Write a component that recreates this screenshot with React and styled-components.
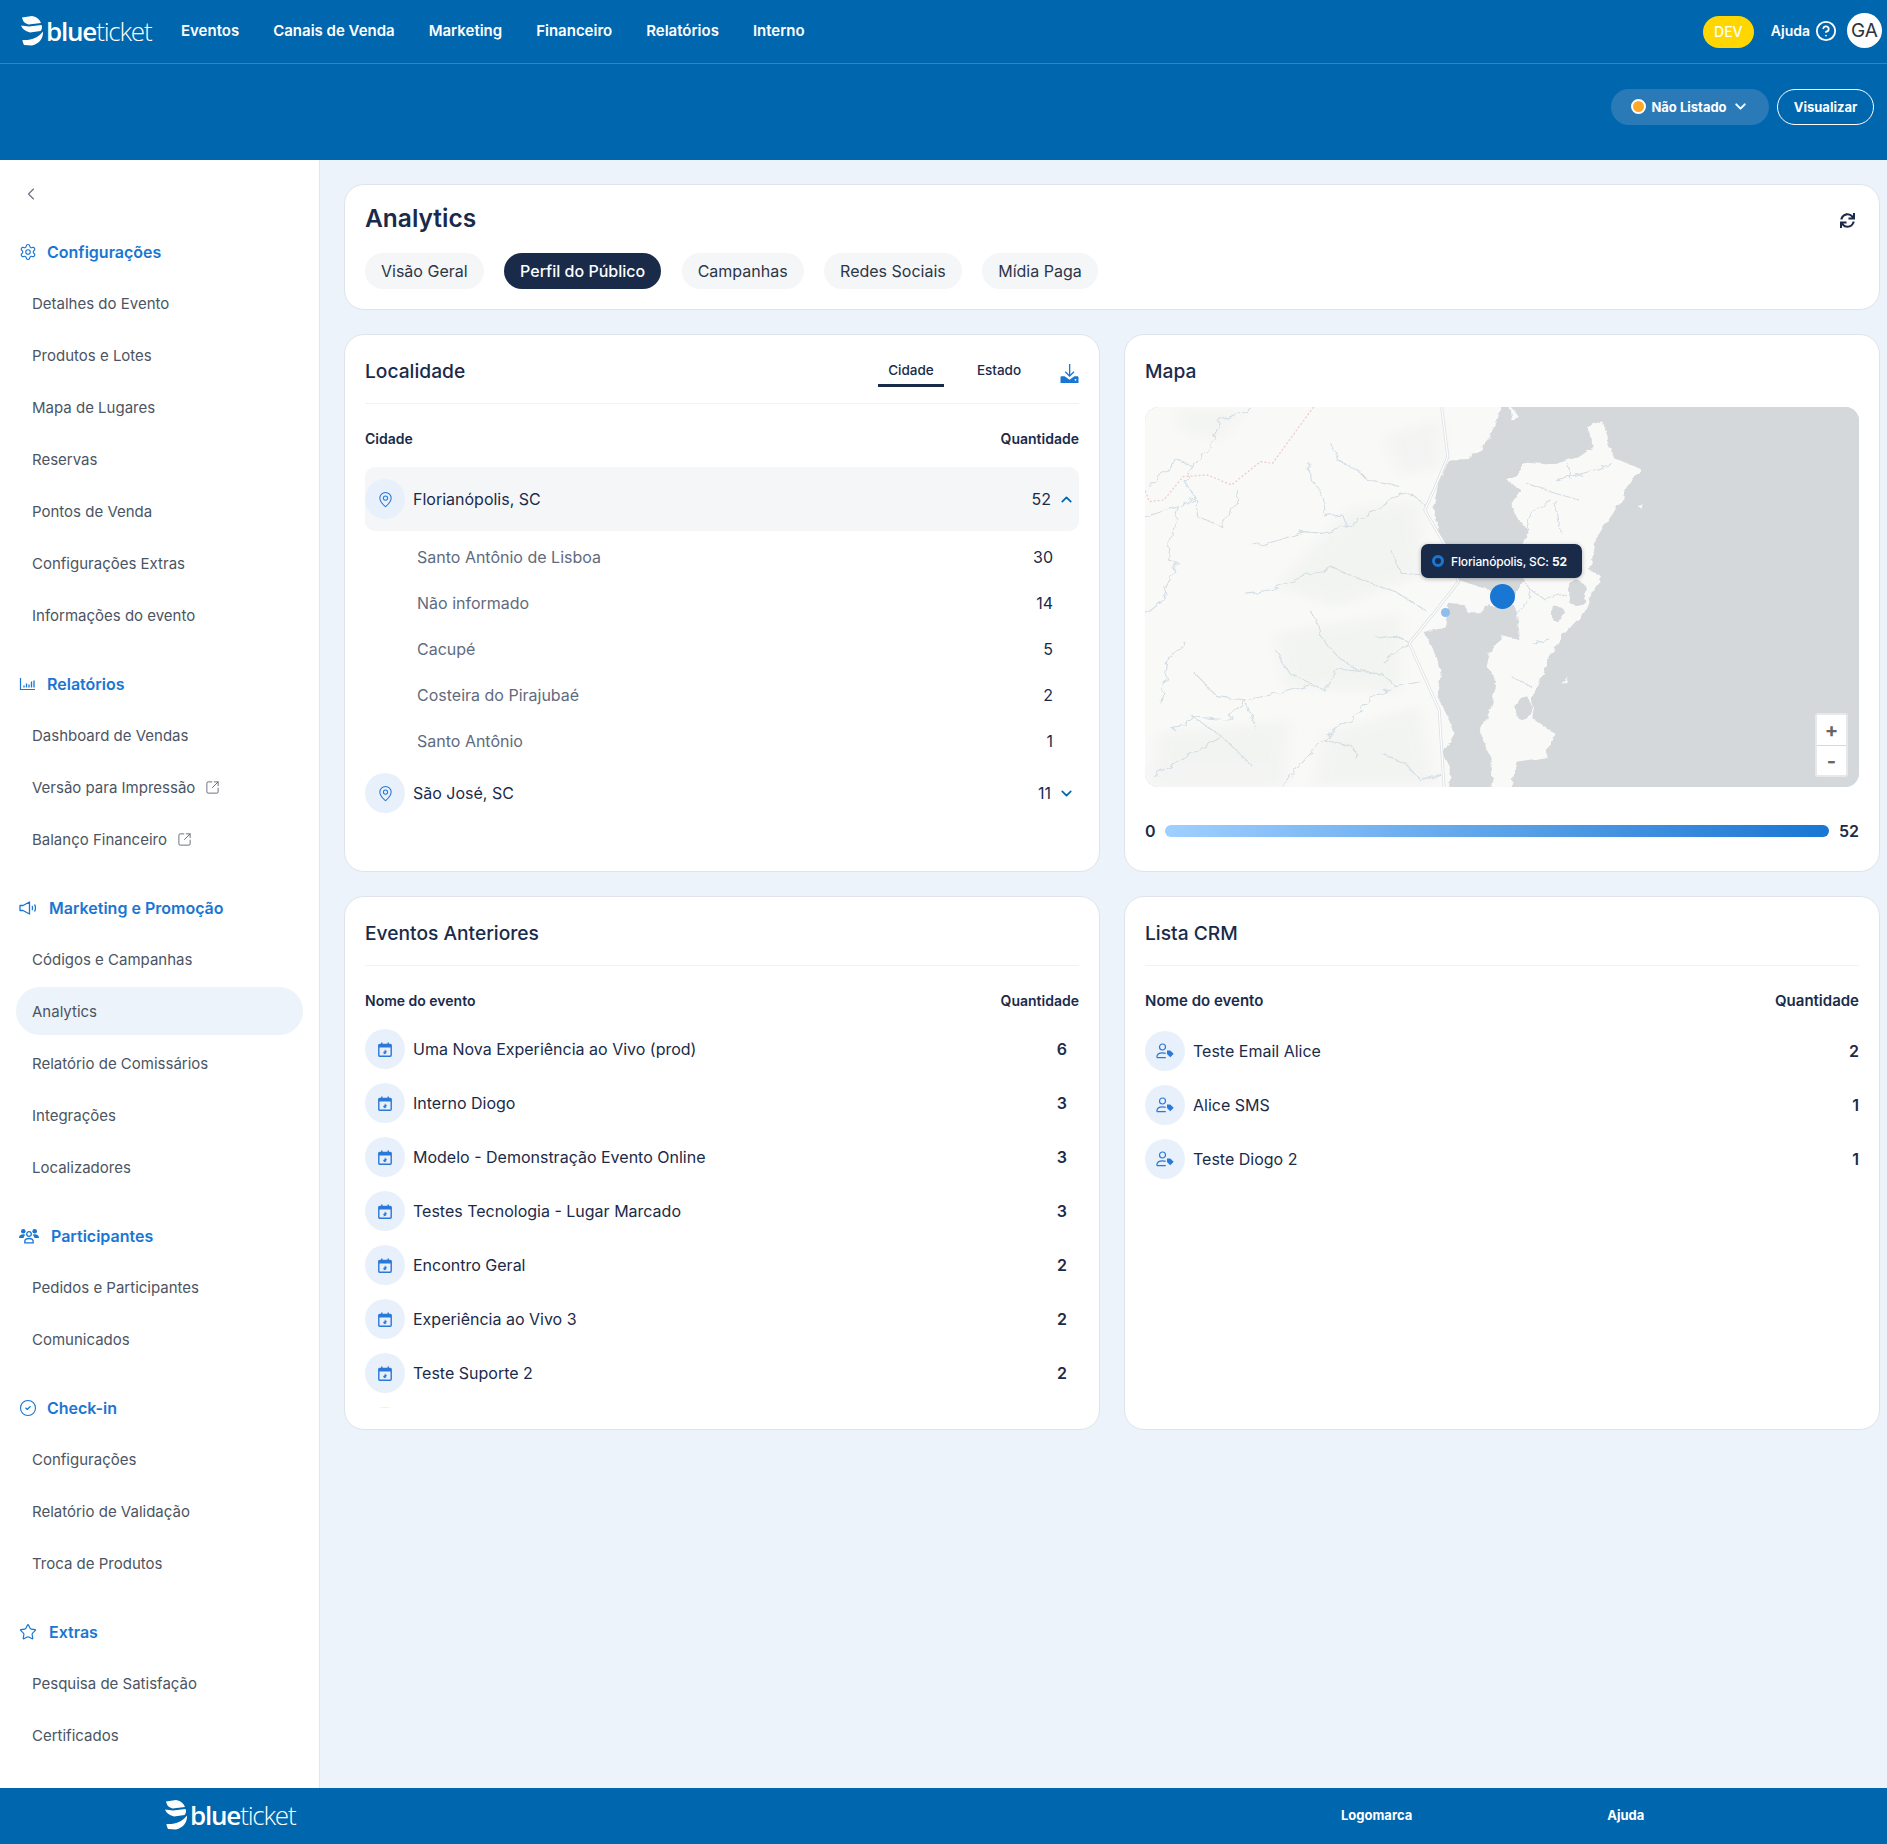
import React from "react";
import styled, { createGlobalStyle } from "styled-components";
import {
  ChevronDown,
  ChevronLeft,
  ChevronUp,
  CircleCheck,
  CircleHelp,
  MapPin,
  Settings,
  SquareArrowOutUpRight,
  Star,
} from "lucide-react";
import { FaSync } from "react-icons/fa";

const BLUE = "#0066ae";
const ACCENT = "#1976d2";
const NAVY = "#1a2b4a";

const GlobalStyle = createGlobalStyle`
  * { box-sizing: border-box; }
  body {
    margin: 0;
    background: #edf3fa;
    font-family: Inter, "Liberation Sans", sans-serif;
    color: ${NAVY};
  }
`;

const Page = styled.div`
  width: 1887px;
  height: 1844px;
  display: flex;
  flex-direction: column;
  overflow: hidden;
`;

const TopBar = styled.header`
  height: 64px;
  background: ${BLUE};
  border-bottom: 1px solid #3a84bd;
  display: flex;
  align-items: center;
  padding: 0 5px 2px 20px;
  color: #fff;
`;

const LogoWrap = styled.div`
  display: flex;
  align-items: center;
  gap: 2px;
  width: 161px;
  flex-shrink: 0;
`;

const LogoText = styled.span`
  font-family: "Open Sans", sans-serif;
  font-size: 26px;
  line-height: 32px;
  letter-spacing: -1.2px;
  color: #fff;
  font-weight: 300;
  b {
    font-weight: 600;
  }
`;

const Nav = styled.nav`
  display: flex;
  gap: 34px;
  flex: 1;
`;

const NavLink = styled.a`
  font-size: 15px;
  font-weight: 600;
  color: #fff;
`;

const DevBadge = styled.span`
  width: 51px;
  height: 32px;
  border-radius: 16px;
  background: #ffd600;
  color: #fff;
  font-size: 14px;
  font-weight: 500;
  display: flex;
  align-items: center;
  justify-content: center;
  margin: 2px 17px 0 0;
`;

const HelpLink = styled.span`
  display: flex;
  align-items: center;
  gap: 5px;
  font-size: 14px;
  font-weight: 600;
  margin-right: 10px;
`;

const Avatar = styled.span`
  width: 35px;
  height: 35px;
  border-radius: 50%;
  background: #fff;
  color: #2b3440;
  font-size: 19px;
  display: flex;
  align-items: center;
  justify-content: center;
`;

const SubBar = styled.div`
  height: 96px;
  background: ${BLUE};
  display: flex;
  justify-content: flex-end;
  align-items: flex-start;
  gap: 8px;
  padding: 25px 13px 0 0;
`;

const StatusPill = styled.div`
  width: 158px;
  height: 36px;
  padding-bottom: 1px;
  border-radius: 18px;
  background: #2b7ab8;
  color: #fff;
  font-size: 13px;
  font-weight: 700;
  display: flex;
  align-items: center;
  justify-content: center;
  gap: 5px;
`;

const StatusDot = styled.span`
  width: 15px;
  height: 15px;
  border-radius: 50%;
  background: #ffa726;
  border: 2px solid #fff;
`;

const OutlineButton = styled.div`
  width: 97px;
  height: 36px;
  padding-bottom: 1px;
  border-radius: 18px;
  border: 1px solid #fff;
  color: #fff;
  font-size: 13px;
  font-weight: 700;
  display: flex;
  align-items: center;
  justify-content: center;
`;

const Middle = styled.div`
  flex: 1;
  display: flex;
  min-height: 0;
`;

const Sidebar = styled.aside`
  width: 320px;
  flex-shrink: 0;
  background: #fff;
  border-right: 1px solid #e2e6ec;
`;

const BackRow = styled.div`
  height: 54px;
  padding: 24px 0 0 21px;
  margin-bottom: 12px;
  color: #6b7280;
`;

const Section = styled.section`
  display: flex;
  flex-direction: column;
  margin-bottom: 17px;
`;

const SectionHead = styled.div`
  height: 51px;
  padding-left: 19px;
  display: flex;
  align-items: center;
  gap: ${(p) => p.$gap}px;
  font-size: 16px;
  font-weight: 600;
  color: ${ACCENT};
`;

const SideItem = styled.a`
  height: 48px;
  margin: 2px 16px;
  padding-left: 16px;
  border-radius: 24px;
  display: flex;
  align-items: center;
  gap: 10px;
  font-size: 15px;
  color: #4b5563;
  background: ${(p) => (p.$active ? "#edf3fa" : "transparent")};
`;

const Main = styled.main`
  flex: 1;
  padding: 24px 7px 0 24px;
  display: flex;
  flex-direction: column;
  gap: 24px;
`;

const Card = styled.div`
  background: #fff;
  border: 1px solid #e0e4ea;
  border-radius: 20px;
  padding: 0 20px;
  min-width: 0;
  overflow: hidden;
`;

const HeroCard = styled(Card)`
  height: 126px;
`;

const HeroTop = styled.div`
  height: 68px;
  display: flex;
  align-items: center;
  justify-content: space-between;
  padding: 0 4px 2px 0;
`;

const HeroTitle = styled.h1`
  margin: 0;
  font-size: 24.5px;
  font-weight: 600;
  color: ${NAVY};
`;

const RefreshIcon = styled(FaSync)`
  margin-top: 4px;
  color: ${NAVY};
`;

const TabRow = styled.div`
  display: flex;
  gap: 20.5px;
`;

const Tab = styled.span`
  height: 36px;
  padding: 0 16px;
  border-radius: 18px;
  font-size: 16px;
  display: flex;
  align-items: center;
  background: ${(p) => (p.$active ? NAVY : "#f5f6f8")};
  color: ${(p) => (p.$active ? "#fff" : "#2b3648")};
  font-weight: ${(p) => (p.$active ? 500 : 400)};
`;

const Grid = styled.div`
  display: grid;
  grid-template-columns: 1fr 1fr;
  grid-template-rows: 538px 534px;
  column-gap: 24px;
  row-gap: 24px;
`;

const CardHead = styled.div`
  height: 69px;
  padding-top: 3px;
  display: flex;
  align-items: center;
  justify-content: space-between;
  border-bottom: ${(p) => (p.$plain ? "none" : "1px solid #f0f2f5")};
`;

const CardTitle = styled.h2`
  margin: 0;
  font-size: 19.2px;
  font-weight: 500;
  color: ${NAVY};
`;

const HeadTools = styled.div`
  display: flex;
  align-self: flex-start;
  margin-top: -3px;
`;

const MiniTab = styled.span`
  width: 66px;
  height: 35px;
  margin: 17px 22px 0 0;
  padding-top: 4px;
  display: flex;
  align-items: center;
  justify-content: center;
  font-size: 13.5px;
  font-weight: 500;
  color: ${NAVY};
  border-bottom: 3px solid ${(p) => (p.$active ? NAVY : "transparent")};
`;

const DownloadSlot = styled.span`
  margin: 29px 0 0 6px;
  display: flex;
`;

const TableHead = styled.div`
  height: 63px;
  padding-top: 6px;
  display: flex;
  align-items: center;
  justify-content: space-between;
  font-size: ${(p) => p.$size || 14}px;
  font-weight: 600;
  color: ${NAVY};
`;

const CityRow = styled.div`
  height: ${(p) => (p.$open ? 64 : 58)}px;
  display: flex;
  align-items: center;
  border-radius: 10px;
  background: ${(p) => (p.$open ? "#f5f6f8" : "transparent")};
`;

const IconCircle = styled.span`
  width: 40px;
  height: 40px;
  border-radius: 50%;
  flex-shrink: 0;
  background: #e8f1fb;
  color: #2a78d8;
  display: flex;
  align-items: center;
  justify-content: center;
  margin-right: 8px;
`;

const RowLabel = styled.span`
  flex: 1;
  font-size: 16px;
  color: ${NAVY};
`;

const CityCount = styled.span`
  font-size: 16px;
  color: ${NAVY};
`;

const Chevron = styled.span`
  width: 28px;
  padding-right: 4px;
  display: flex;
  justify-content: flex-end;
  color: ${BLUE};
`;

const SubList = styled.div`
  padding-top: 3px;
`;

const SubRow = styled.div`
  height: 46px;
  padding: 0 26px 0 52px;
  display: flex;
  align-items: center;
  justify-content: space-between;
  font-size: 16px;
  color: #5f6b7e;
  span:last-child {
    color: ${NAVY};
  }
`;

const MapBox = styled.div`
  position: relative;
  height: 380px;
  margin-top: 3px;
  border-radius: 14px;
  overflow: hidden;
  background: #d4d8db;
  svg.base {
    display: block;
    width: 100%;
    height: 100%;
  }
`;

const MapDot = styled.span`
  position: absolute;
  left: ${(p) => p.$x}px;
  top: ${(p) => p.$y}px;
  width: ${(p) => p.$size}px;
  height: ${(p) => p.$size}px;
  margin: ${(p) => -p.$size / 2}px 0 0 ${(p) => -p.$size / 2}px;
  border-radius: 50%;
  background: ${(p) => p.$color};
`;

const MapTip = styled.div`
  position: absolute;
  left: 276px;
  top: 137px;
  width: 161px;
  height: 34px;
  border-radius: 7px;
  background: ${NAVY};
  box-shadow: 0 1px 4px rgba(0, 0, 0, 0.3);
  color: #fff;
  font-size: 12px;
  font-weight: 500;
  letter-spacing: -0.15px;
  display: flex;
  align-items: center;
  gap: 7px;
  padding-left: 11px;
  b {
    font-weight: 700;
  }
`;

const TipRing = styled.span`
  width: 12px;
  height: 12px;
  border-radius: 50%;
  border: 3.5px solid ${ACCENT};
  background: ${NAVY};
`;

const ZoomBox = styled.div`
  position: absolute;
  right: 11px;
  bottom: 10px;
  width: 33px;
  height: 64px;
  background: #fff;
  border: 2px solid #e6e8ea;
  border-radius: 3px;
  display: grid;
  grid-template-rows: 1fr 1fr;
`;

const ZoomKey = styled.span`
  display: flex;
  align-items: center;
  justify-content: center;
  font-size: 20px;
  font-weight: 700;
  line-height: 1;
  color: #666;
  & + & {
    border-top: 1px solid #d5d8dc;
  }
`;

const Legend = styled.div`
  height: 30px;
  margin-top: 29px;
  display: flex;
  align-items: center;
  gap: 9.5px;
  font-size: 16px;
  font-weight: 600;
  color: ${NAVY};
`;

const LegendBar = styled.div`
  flex: 1;
  height: 12px;
  border-radius: 6px;
  background: linear-gradient(90deg, #9fcfff, ${ACCENT});
`;

const ScrollList = styled.div`
  height: ${(p) => p.$h}px;
  margin-top: ${(p) => p.$top}px;
  overflow: hidden;
`;

const ListRow = styled.div`
  height: 54px;
  padding: 7px 0;
  display: flex;
  align-items: center;
`;

const RowValue = styled.span`
  font-size: 16px;
  font-weight: 600;
  color: ${NAVY};
  padding-right: ${(p) => p.$pad || 0}px;
`;

const Footer = styled.footer`
  height: 56px;
  background: ${BLUE};
  display: flex;
  align-items: center;
  padding: 0 0 2px 164px;
  color: #fff;
  font-size: 13px;
  font-weight: 700;
`;

const FooterLinks = styled.div`
  margin-left: 1016px;
  display: flex;
  gap: 195px;
`;

const LogoMark = () => (
  <svg width="24" height="30" viewBox="0 0 24 30" fill="#fff">
    <path d="M2 1.500 L12 0 C17 1 20 4 21 7 L8.500 8.500 C5 7.500 3 6 2 1.500Z" />
    <path d="M1 9.500 L9 10.500 L21.500 9 C22.500 11 22 13.500 20.500 15 L10 16.500 C5 15 2 13 1 9.500Z" />
    <path d="M23 15.500 C23.500 22 19 28 12 29.500 L4 29 C3 27 2.600 25.500 2.500 24 C12 24.500 19 21 23 15.500Z" />
  </svg>
);

const Logo = () => (
  <LogoWrap>
    <LogoMark />
    <LogoText>
      <b>blue</b>ticket
    </LogoText>
  </LogoWrap>
);

const ChartIcon = () => (
  <svg width="17" height="14" viewBox="0 0 16 14" fill="none" stroke="currentColor" strokeWidth="1.200">
    <path d="M1 1v11.500h14.500" />
    <path d="M4.500 10.500v-2M7 10.500v-4M9.500 10.500v-3M12 10.500v-6M14.500 10.500v-7" strokeWidth="1.300" />
  </svg>
);

const SpeakerIcon = () => (
  <svg width="18" height="14" viewBox="0 0 18 14" fill="none" stroke="currentColor" strokeWidth="1.300" strokeLinejoin="round">
    <path d="M1 4.500h3L10.500 1v12L4 9.500H1z" />
    <path d="M13 5c.7.600.7 3.400 0 4M15.500 3.500c1.300 1.500 1.300 5.500 0 7" />
  </svg>
);

const UsersIcon = () => (
  <svg width="20" height="16" viewBox="0 0 20 16" fill="currentColor">
    <circle cx="4.300" cy="3.200" r="2.300" />
    <circle cx="15.700" cy="3.200" r="2.300" />
    <path d="M0 10c0-2.600 1.600-3.800 4.300-3.800 1 0 1.700.2 2.300.5C5.300 7.500 4.700 8.700 4.600 10H0zM20 10c0-2.600-1.600-3.800-4.300-3.800-1 0-1.700.2-2.300.5 1.300.8 1.900 2 2 3.300H20z" />
    <circle cx="10" cy="6" r="2.300" fill="none" stroke="currentColor" strokeWidth="1.300" />
    <path d="M5.800 14.800v-1.300c0-2 1.700-3 4.200-3s4.200 1 4.200 3v1.300z" fill="none" stroke="currentColor" strokeWidth="1.300" />
  </svg>
);

const CalendarIcon = () => (
  <svg width="14" height="15" viewBox="0 0 14 15" fill="none">
    <rect x="0.800" y="2.500" width="12.400" height="11.700" rx="1" stroke="#2a78d8" strokeWidth="1.400" />
    <rect x="0.800" y="2.500" width="12.400" height="3" fill="#2a78d8" />
    <path d="M3.800 0.500v3M10.200 0.500v3" stroke="#2a78d8" strokeWidth="1.400" />
    <path d="M7 7.200l.7 1.500 1.600.2-1.200 1.100.3 1.600L7 11.800l-1.400.8.300-1.600-1.200-1.100 1.600-.2z" fill="#2a78d8" />
  </svg>
);

const PersonTagIcon = () => (
  <svg width="18" height="16" viewBox="0 0 18 16" fill="none">
    <circle cx="6.500" cy="4" r="3" stroke="#2a78d8" strokeWidth="1.200" />
    <path d="M0.800 14.600c0-3 2.200-4.800 5.700-4.800 1.200 0 2.300.2 3.200.6M0.800 14.600h9" stroke="#2a78d8" strokeWidth="1.200" />
    <path d="M11 7.500h3.200l3.500 3.200-3.400 3.500-3.300-3.200z" fill="#2a78d8" />
  </svg>
);

const DownloadIcon = () => (
  <svg width="19" height="19" viewBox="0 0 19 19" fill={ACCENT}>
    <path d="M9 0h1.300v10.500l3.200-3.200.9.900-4.800 4.800-4.800-4.800.9-.9L9 10.500z" />
    <path d="M0.500 13.500c0-.8.600-1.300 1.300-1.300h2.800l4.900 3.600 4.900-3.600h2.800c.7 0 1.300.5 1.300 1.300V19H0.500z" />
    <circle cx="15.500" cy="15.800" r="0.900" fill="#fff" />
  </svg>
);

const RIVER = [
  "M31 350L100 320L85 400L80 480L100 490L75 560L70 600L31 645",
  "M40 260L100 180L130 200L160 150L190 60L250 25M130 200L110 240L135 290L105 320M135 290L140 350L190 380L225 300L220 270",
  "M415 130L430 180L470 210L490 240L560 260M372 190L375 240L400 290L405 350L440 345L450 380L490 350L540 295L580 280L615 320",
  "M260 438L310 420L360 395L400 400L450 380M235 580L290 570L340 540L380 520L415 500L480 540L550 575L610 630",
  "M378 635L390 700L430 770L470 810L520 820L550 860L600 845M300 750L330 820L375 850L290 885L240 900L200 960L130 950L90 990M240 900L260 985M130 950L190 1010L255 1100M190 1010L130 1060L50 1130",
  "M375 855L400 870L430 810L500 820M540 870L500 890L470 940L400 1020L310 1161M400 1020L460 1040L470 1080M525 1065L570 1090L600 1140L640 1120",
  "M64 910L80 770L120 730M135 820L180 890L240 900M510 715L550 705L580 730M525 790L580 730",
  "M820 250L880 280L930 300M880 240L950 215L1000 190M870 300L830 340L820 390M905 190L915 240M880 300L895 400M820 560L860 600L900 580M830 730L870 720M790 830L830 860",
  "M540 450L560 520L610 525M815 540L830 580L805 640",
];

const HIGHWAY = "M645 21L658 170L632 260L610 330L650 430L680 545L640 620L578 730L640 930L650 1161";

// drawn in the crop's own coordinates and stretched over the map box
const MapArt = () => (
  <svg className="base" viewBox="31 21 1478 1140" preserveAspectRatio="none">
    <defs>
      <filter id="soft">
        <feGaussianBlur stdDeviation="14" />
      </filter>
      <filter id="coast" x="-5%" y="-5%" width="110%" height="110%">
        <feTurbulence type="fractalNoise" baseFrequency="0.035" numOctaves="3" seed="4" />
        <feDisplacementMap in="SourceGraphic" scale="16" />
      </filter>
      <filter id="wiggle" x="-5%" y="-5%" width="110%" height="110%">
        <feTurbulence type="fractalNoise" baseFrequency="0.04" numOctaves="2" seed="9" />
        <feDisplacementMap in="SourceGraphic" scale="22" />
      </filter>
    </defs>
    <rect x="31" y="21" width="1478" height="1140" fill="#d4d8db" />
    <g fill="#f9f9f8" filter="url(#coast)">
      <path d="M0 0H770L755 60L745 110L722 150L700 178L662 178L640 240L628 320L640 400L655 440L680 540L745 570L745 610L725 640L700 640L690 612L660 610L652 680L610 700L632 760L645 820L635 880L660 960L672 1000L648 1060L662 1100L660 1200H0Z" />
      <path d="M800 230L780 240L808 270L790 310L800 350L825 390L810 440L815 540L795 590L800 650L806 720L770 708L745 760L738 800L762 850L748 920L725 1000L748 1080L752 1200H785L800 1085L860 1072L878 1000L838 960L832 900L868 780L900 700L945 630L962 565L978 530L950 510L962 420L1000 340L1040 240L1058 208L1000 172L985 100L975 60L950 85L960 140L930 170L880 192L820 185Z" />
      <path d="M785 15L805 50L790 62Z" />
      <path d="M1050 318L1064 314L1060 326Z" />
      <path d="M900 825L904 850L896 855Z" />
      <path d="M745 605H800V618H745Z" />
    </g>
    <g fill="#eef1ee" filter="url(#soft)" opacity="0.55">
      <path d="M100 30L240 30L180 120L110 90Z" />
      <path d="M450 330L600 300L610 520L430 620L300 560Z" />
      <path d="M300 700L560 640L560 880L320 860Z" />
      <path d="M60 1000L330 960L320 1161H40Z" />
      <path d="M400 1000L600 920L630 1161H380Z" />
      <path d="M530 110L640 60L640 200L560 220Z" />
    </g>
    <g fill="none" stroke="#d3dde3" strokeWidth="1.100" filter="url(#wiggle)">
      {RIVER.map((d) => (
        <path key={d} vectorEffect="non-scaling-stroke" d={d} />
      ))}
    </g>
    <path vectorEffect="non-scaling-stroke" d={HIGHWAY} fill="none" stroke="#dfe3e6" strokeWidth="3" />
    <path vectorEffect="non-scaling-stroke" d={HIGHWAY} fill="none" stroke="#fff" strokeWidth="1.200" />
    <path
      d="M380 21L340 100L295 190L270 185L210 255L160 225L110 230L70 300L40 305L31 270"
      fill="none"
      stroke="#eec9c9"
      strokeWidth="1.200"
      strokeDasharray="2 2"
      vectorEffect="non-scaling-stroke"
    />
    <g fill="#d4d8db" filter="url(#coast)">
      <ellipse cx="815" cy="925" rx="17" ry="38" />
      <ellipse cx="885" cy="642" rx="14" ry="24" />
      <ellipse cx="925" cy="580" rx="20" ry="38" />
    </g>
  </svg>
);

const sideMenu = [
  {
    title: "Configurações",
    gap: 10,
    icon: <Settings size={18} strokeWidth={1.5} />,
    items: ["Detalhes do Evento", "Produtos e Lotes", "Mapa de Lugares", "Reservas", "Pontos de Venda", "Configurações Extras", "Informações do evento"],
  },
  {
    title: "Relatórios",
    gap: 11,
    icon: <ChartIcon />,
    items: ["Dashboard de Vendas", { label: "Versão para Impressão", ext: true }, { label: "Balanço Financeiro", ext: true }],
  },
  {
    title: "Marketing e Promoção",
    gap: 12,
    icon: <SpeakerIcon />,
    items: ["Códigos e Campanhas", { label: "Analytics", active: true }, "Relatório de Comissários", "Integrações", "Localizadores"],
  },
  { title: "Participantes", gap: 12, icon: <UsersIcon />, items: ["Pedidos e Participantes", "Comunicados"] },
  {
    title: "Check-in",
    gap: 10,
    icon: <CircleCheck size={18} strokeWidth={1.5} />,
    items: ["Configurações", "Relatório de Validação", "Troca de Produtos"],
  },
  { title: "Extras", gap: 12, icon: <Star size={18} strokeWidth={1.6} />, items: ["Pesquisa de Satisfação", "Certificados"] },
];

const navLinks = ["Eventos", "Canais de Venda", "Marketing", "Financeiro", "Relatórios", "Interno"];
const heroTabs = ["Visão Geral", "Perfil do Público", "Campanhas", "Redes Sociais", "Mídia Paga"];
const bairros = [
  ["Santo Antônio de Lisboa", 30],
  ["Não informado", 14],
  ["Cacupé", 5],
  ["Costeira do Pirajubaé", 2],
  ["Santo Antônio", 1],
];
const eventos = [
  ["Uma Nova Experiência ao Vivo (prod)", 6],
  ["Interno Diogo", 3],
  ["Modelo - Demonstração Evento Online", 3],
  ["Testes Tecnologia - Lugar Marcado", 3],
  ["Encontro Geral", 2],
  ["Experiência ao Vivo 3", 2],
  ["Teste Suporte 2", 2],
];
const crm = [
  ["Teste Email Alice", 2],
  ["Alice SMS", 1],
  ["Teste Diogo 2", 1],
];

export default function App() {
  return (
    <Page>
      <GlobalStyle />
      <TopBar>
        <Logo />
        <Nav>
          {navLinks.map((n) => (
            <NavLink key={n}>{n}</NavLink>
          ))}
        </Nav>
        <DevBadge>DEV</DevBadge>
        <HelpLink>
          Ajuda <CircleHelp size={22} strokeWidth={2} />
        </HelpLink>
        <Avatar>GA</Avatar>
      </TopBar>
      <SubBar>
        <StatusPill>
          <StatusDot />
          Não Listado
          <ChevronDown size={17} strokeWidth={2.8} />
        </StatusPill>
        <OutlineButton>Visualizar</OutlineButton>
      </SubBar>

      <Middle>
        <Sidebar>
          <BackRow>
            <ChevronLeft size={20} strokeWidth={1.4} />
          </BackRow>
          {sideMenu.map((s) => (
            <Section key={s.title}>
              <SectionHead $gap={s.gap}>
                {s.icon}
                {s.title}
              </SectionHead>
              {s.items.map((it) => {
                const item = typeof it === "string" ? { label: it } : it;
                return (
                  <SideItem key={item.label} $active={item.active}>
                    {item.label}
                    {item.ext && <SquareArrowOutUpRight size={15} strokeWidth={1.3} />}
                  </SideItem>
                );
              })}
            </Section>
          ))}
        </Sidebar>

        <Main>
          <HeroCard>
            <HeroTop>
              <HeroTitle>Analytics</HeroTitle>
              <RefreshIcon size={15} />
            </HeroTop>
            <TabRow>
              {heroTabs.map((t) => (
                <Tab key={t} $active={t === "Perfil do Público"}>
                  {t}
                </Tab>
              ))}
            </TabRow>
          </HeroCard>

          <Grid>
            <Card>
              <CardHead>
                <CardTitle>Localidade</CardTitle>
                <HeadTools>
                  <MiniTab $active>Cidade</MiniTab>
                  <MiniTab>Estado</MiniTab>
                  <DownloadSlot>
                    <DownloadIcon />
                  </DownloadSlot>
                </HeadTools>
              </CardHead>
              <TableHead>
                <span>Cidade</span>
                <span>Quantidade</span>
              </TableHead>
              <CityRow $open>
                <IconCircle>
                  <MapPin size={17} strokeWidth={1.5} />
                </IconCircle>
                <RowLabel>Florianópolis, SC</RowLabel>
                <CityCount>52</CityCount>
                <Chevron>
                  <ChevronUp size={17} strokeWidth={2.4} />
                </Chevron>
              </CityRow>
              <SubList>
                {bairros.map(([name, n]) => (
                  <SubRow key={name}>
                    <span>{name}</span>
                    <span>{n}</span>
                  </SubRow>
                ))}
              </SubList>
              <CityRow>
                <IconCircle>
                  <MapPin size={17} strokeWidth={1.5} />
                </IconCircle>
                <RowLabel>São José, SC</RowLabel>
                <CityCount>11</CityCount>
                <Chevron>
                  <ChevronDown size={17} strokeWidth={2.4} />
                </Chevron>
              </CityRow>
            </Card>

            <Card>
              <CardHead $plain>
                <CardTitle>Mapa</CardTitle>
              </CardHead>
              <MapBox>
                <MapArt />
                <MapDot $x={357} $y={189} $size={25} $color={ACCENT} />
                <MapDot $x={300} $y={205} $size={9} $color="#8fbdec" />
                <MapTip>
                  <TipRing />
                  <span>
                    Florianópolis, SC: <b>52</b>
                  </span>
                </MapTip>
                <ZoomBox>
                  <ZoomKey>+</ZoomKey>
                  <ZoomKey>-</ZoomKey>
                </ZoomBox>
              </MapBox>
              <Legend>
                0
                <LegendBar />
                52
              </Legend>
            </Card>

            <Card>
              <CardHead>
                <CardTitle>Eventos Anteriores</CardTitle>
              </CardHead>
              <TableHead>
                <span>Nome do evento</span>
                <span>Quantidade</span>
              </TableHead>
              <ScrollList $h={386} $top={-7}>
                {eventos.map(([name, n]) => (
                  <ListRow key={name}>
                    <IconCircle>
                      <CalendarIcon />
                    </IconCircle>
                    <RowLabel>{name}</RowLabel>
                    <RowValue $pad={12}>{n}</RowValue>
                  </ListRow>
                ))}
                <ListRow>
                  <IconCircle />
                </ListRow>
              </ScrollList>
            </Card>

            <Card>
              <CardHead>
                <CardTitle>Lista CRM</CardTitle>
              </CardHead>
              <TableHead $size={15}>
                <span>Nome do evento</span>
                <span>Quantidade</span>
              </TableHead>
              <ScrollList $h={380} $top={-5}>
                {crm.map(([name, n]) => (
                  <ListRow key={name}>
                    <IconCircle>
                      <PersonTagIcon />
                    </IconCircle>
                    <RowLabel>{name}</RowLabel>
                    <RowValue>{n}</RowValue>
                  </ListRow>
                ))}
              </ScrollList>
            </Card>
          </Grid>
        </Main>
      </Middle>

      <Footer>
        <Logo />
        <FooterLinks>
          <span>Logomarca</span>
          <span>Ajuda</span>
        </FooterLinks>
      </Footer>
    </Page>
  );
}
